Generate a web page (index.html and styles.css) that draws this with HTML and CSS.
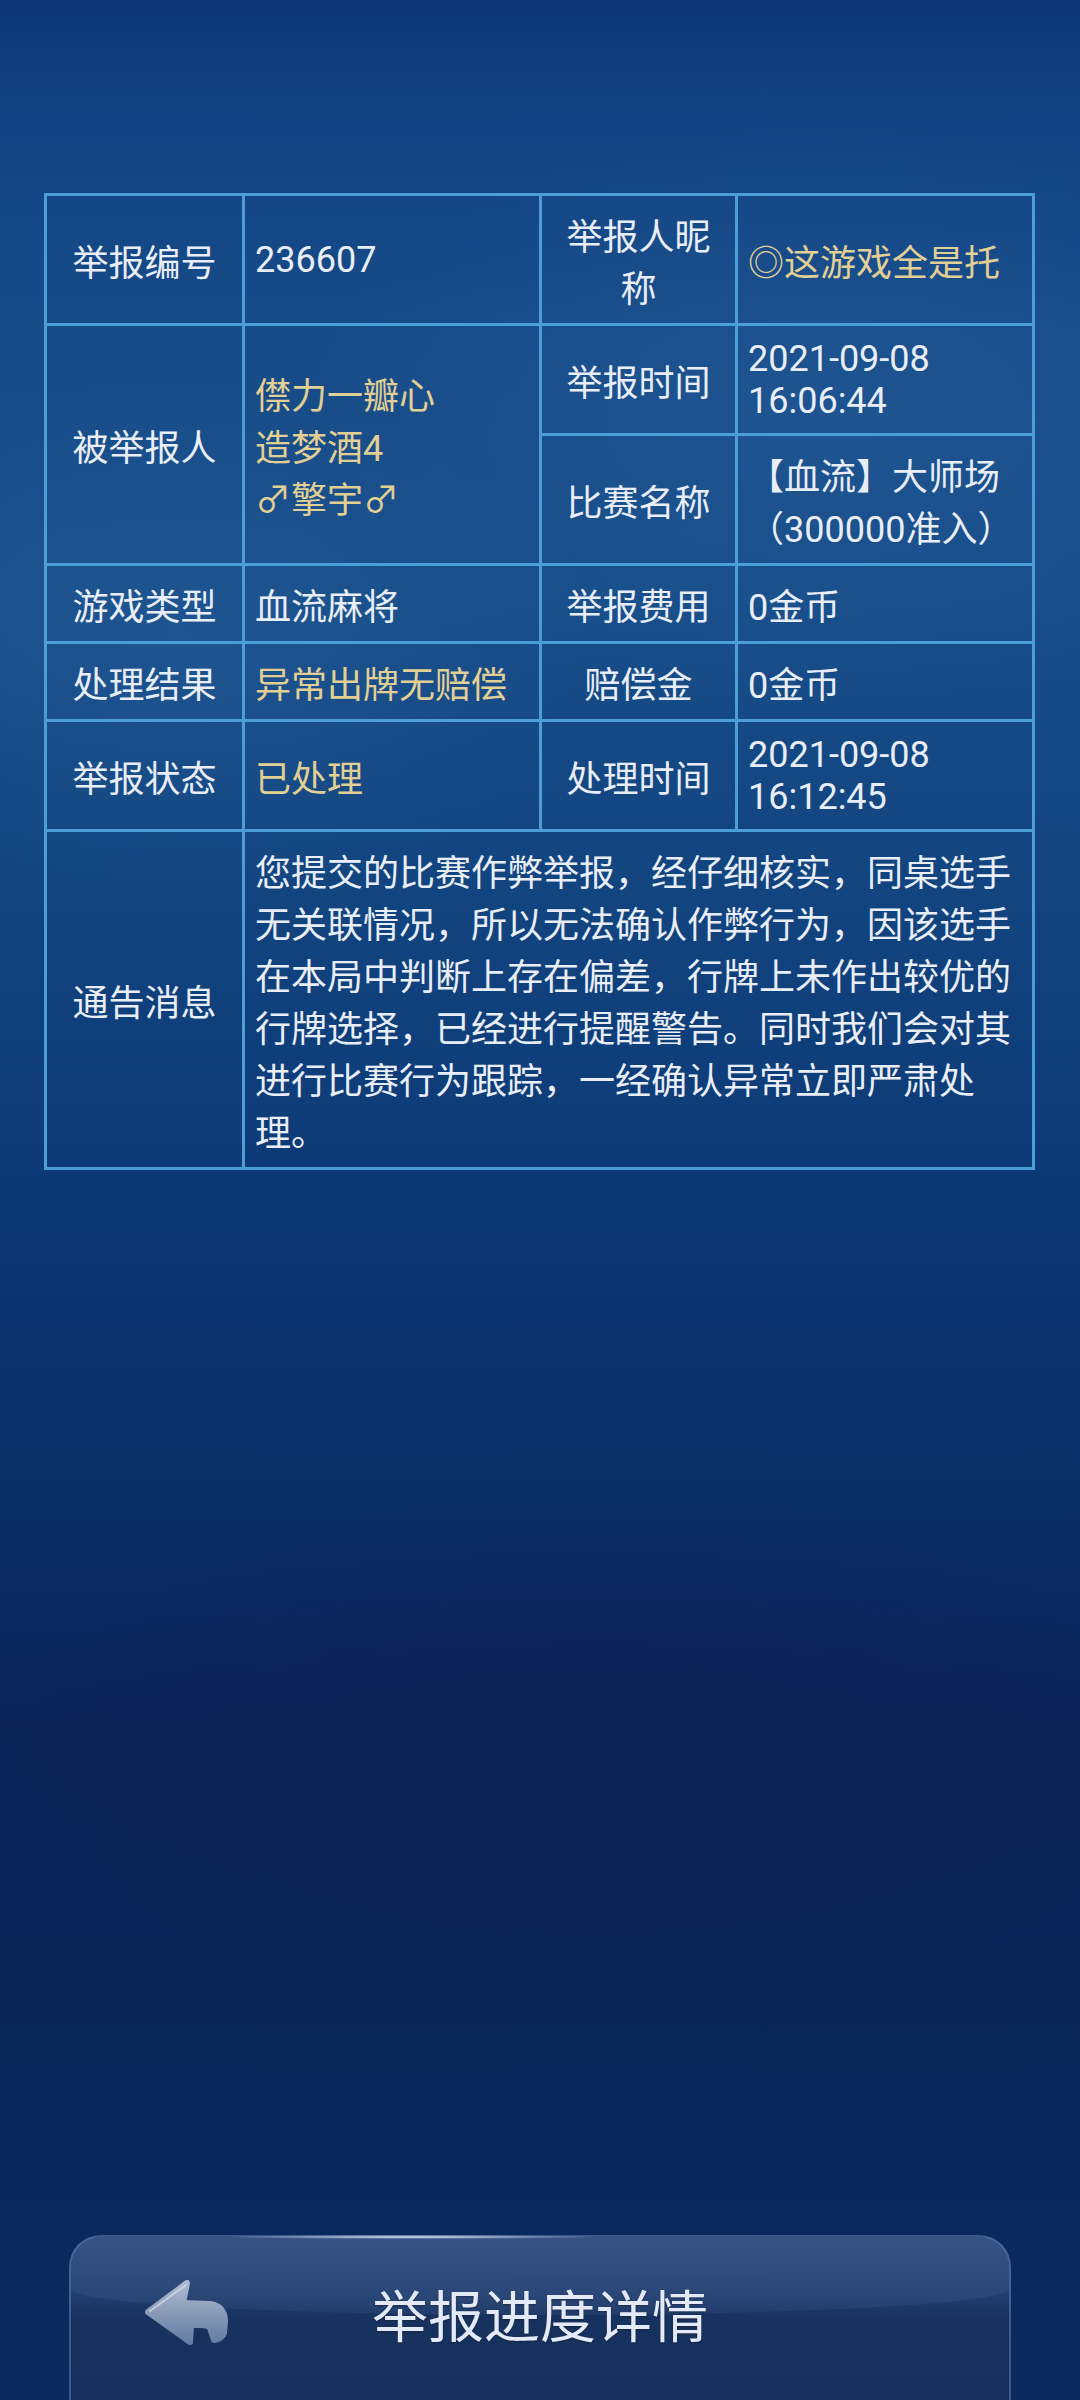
FILE: index.html
```html
<!DOCTYPE html>
<html lang="zh-CN">
<head>
<meta charset="utf-8">
<title>举报进度详情</title>
<link rel="stylesheet" href="styles.css">
</head>
<body>
<div class="page">
  <div class="report">
    <div class="cell label">举报编号</div>
    <div class="cell value"><div>236607</div></div>
    <div class="cell label"><div>举报人昵称</div></div>
    <div class="cell value gold"><div>◎这游戏全是托</div></div>

    <div class="cell label span-row">被举报人</div>
    <div class="cell value gold span-row"><div>僸力一瓣心<br>造梦酒4<br>♂擎宇♂</div></div>
    <div class="cell label">举报时间</div>
    <div class="cell value"><div>2021-09-08 16:06:44</div></div>

    <div class="cell label">比赛名称</div>
    <div class="cell value"><div>【血流】大师场（300000准入）</div></div>

    <div class="cell label">游戏类型</div>
    <div class="cell value"><div>血流麻将</div></div>
    <div class="cell label">举报费用</div>
    <div class="cell value"><div>0金币</div></div>

    <div class="cell label">处理结果</div>
    <div class="cell value gold"><div>异常出牌无赔偿</div></div>
    <div class="cell label">赔偿金</div>
    <div class="cell value"><div>0金币</div></div>

    <div class="cell label">举报状态</div>
    <div class="cell value gold"><div>已处理</div></div>
    <div class="cell label">处理时间</div>
    <div class="cell value"><div>2021-09-08 16:12:45</div></div>

    <div class="cell label">通告消息</div>
    <div class="cell value span-cols"><div>您提交的比赛作弊举报，经仔细核实，同桌选手无关联情况，所以无法确认作弊行为，因该选手在本局中判断上存在偏差，行牌上未作出较优的行牌选择，已经进行提醒警告。同时我们会对其进行比赛行为跟踪，一经确认异常立即严肃处理。</div></div>
  </div>

  <div class="back-bar">
    <svg class="back-icon" width="90" height="75" viewBox="0 0 90 75" aria-hidden="true">
      <defs>
        <linearGradient id="arrowFill" x1="0" y1="0" x2="0" y2="1">
          <stop offset="0" stop-color="#b9c6da"/>
          <stop offset="0.45" stop-color="#9aaac4"/>
          <stop offset="1" stop-color="#6f86ad"/>
        </linearGradient>
      </defs>
      <path d="M8,37 L47,8 L43,28 L70,29 Q85,31 85,47 L84,58 Q82,64 74,65 L70,53 Q68,50 61,50 L51,50 L50,67 Z"
            fill="url(#arrowFill)" stroke="url(#arrowFill)" stroke-width="6" stroke-linejoin="round" opacity="0.9"/>
      <path d="M10,36 L46,10" stroke="#dfe7f3" stroke-width="2" stroke-linecap="round" opacity="0.6" fill="none"/>
    </svg>
    <div class="bar-title">举报进度详情</div>
    <div class="bar-spacer"></div>
  </div>
</div>
</body>
</html>
```

FILE: styles.css
```css
* {
  box-sizing: border-box;
}

html, body {
  margin: 0;
  padding: 0;
}

body {
  font-family: Roboto, "Noto Sans CJK SC", sans-serif;
  background: #0b2a5d;
}

.page {
  width: 1080px;
  height: 2400px;
  overflow: hidden;
  display: flex;
  flex-direction: column;
  background:
    radial-gradient(ellipse 420px 260px at 180px 640px, rgba(70, 130, 190, 0.16), rgba(70, 130, 190, 0) 100%),
    radial-gradient(ellipse 520px 300px at 820px 420px, rgba(80, 140, 200, 0.12), rgba(80, 140, 200, 0) 100%),
    radial-gradient(ellipse 600px 260px at 600px 1750px, rgba(20, 20, 70, 0.25), rgba(20, 20, 70, 0) 100%),
    linear-gradient(180deg,
      #0d3777 0px,
      #124281 120px,
      #174c89 330px,
      #174d89 600px,
      #12447f 900px,
      #0d3b77 1150px,
      #0a3470 1300px,
      #0a2d65 1500px,
      #0b2559 1720px,
      #0a2659 1950px,
      #0a2a5d 2400px);
}

/* ---------- report table ---------- */
.report {
  margin: 193px 0 0 44px;
  width: 991px;
  display: grid;
  grid-template-columns: 198px 297px 196px 297px;
  border-top: 3px solid #4c9ed6;
  border-left: 3px solid #4c9ed6;
  font-size: 36px;
  line-height: normal;
}

.cell {
  border-right: 3px solid #4c9ed6;
  border-bottom: 3px solid #4c9ed6;
  padding: 12px 10px 11px;
  display: flex;
  align-items: center;
  color: #e9eef6;
}

.label {
  justify-content: center;
  text-align: center;
}

.value {
  justify-content: flex-start;
  text-align: left;
}

.gold {
  color: #e2cf94;
}

.span-row {
  grid-row: span 2;
}

.span-cols {
  grid-column: span 3;
}

/* ---------- bottom bar ---------- */
.back-bar {
  position: relative;
  margin: auto 69px -60px;
  height: 225px;
  border: 2px solid rgba(125, 155, 205, 0.38);
  border-bottom: none;
  border-radius: 32px 32px 0 0;
  background: linear-gradient(180deg, #2a4677 0px, #203d6e 60px, #18325f 80px, #15305e 100%);
  display: grid;
  grid-template-columns: 1fr auto 1fr;
  align-items: center;
  align-content: start;
  padding-top: 38px;
}

.back-bar::before {
  content: "";
  position: absolute;
  left: 0;
  right: 0;
  top: 0;
  height: 78px;
  border-radius: 30px 30px 50% 50% / 30px 30px 26px 26px;
  background: linear-gradient(180deg, rgba(130, 160, 210, 0.14), rgba(130, 160, 210, 0.08));
  pointer-events: none;
}

.back-bar::after {
  content: "";
  position: absolute;
  top: -2px;
  left: 150px;
  width: 380px;
  height: 4px;
  background: radial-gradient(ellipse 50% 50% at 50% 50%, rgba(225, 238, 255, 0.95), rgba(225, 238, 255, 0) 100%);
  pointer-events: none;
}

.back-icon {
  justify-self: start;
  margin-left: 69px;
  position: relative;
  z-index: 1;
  display: block;
}

.bar-title {
  font-family: "Noto Sans CJK SC", sans-serif;
  font-size: 56px;
  line-height: 1;
  color: #e4eaf5;
  position: relative;
  z-index: 1;
  text-shadow: 0 1px 2px rgba(0, 0, 0, 0.3);
}
```
